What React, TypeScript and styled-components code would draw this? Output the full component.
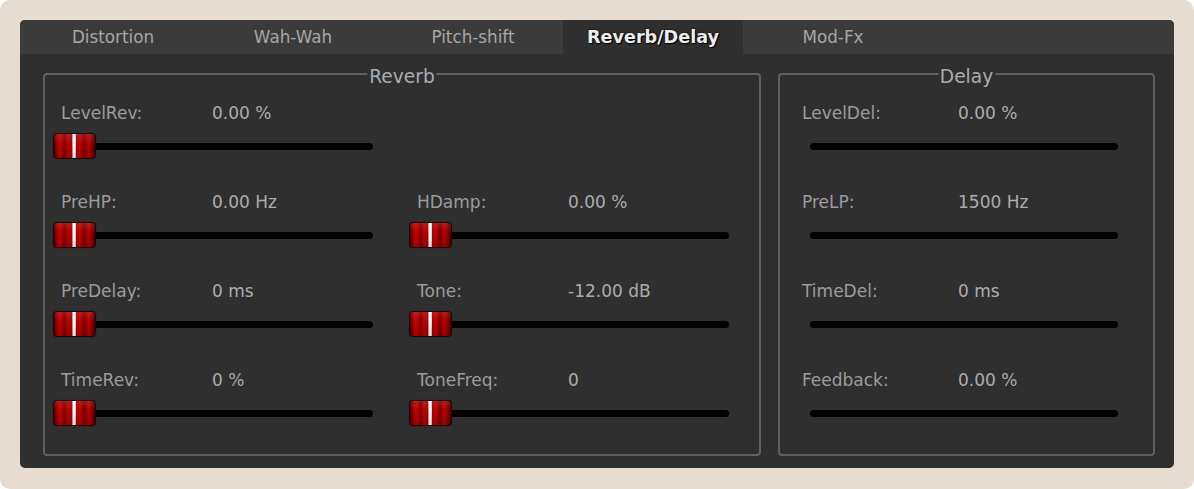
import React from "react";
import styled, { createGlobalStyle } from "styled-components";

const Global = createGlobalStyle`
  html, body { margin: 0; padding: 0; background: #ffffff; }
  body { font-family: "DejaVu Sans", Verdana, sans-serif; }
`;

const Frame = styled.div`
  width: 1194px;
  height: 489px;
  box-sizing: border-box;
  background: #e6dcd2;
  border-radius: 10px;
  padding: 20px 20px 21px 20px;
`;

const Panel = styled.div`
  height: 100%;
  background: #2f2f2f;
  border-radius: 5px;
  overflow: hidden;
  display: flex;
  flex-direction: column;
`;

const TabBar = styled.div`
  height: 34px;
  flex: 0 0 34px;
  background: #3b3b3b;
  display: flex;
  padding-left: 3px;
`;

const Tab = styled.div<{ $active?: boolean }>`
  width: 180px;
  display: flex;
  align-items: center;
  justify-content: center;
  background: ${(p) => (p.$active ? "#2f2f2f" : "#3b3b3b")};
  color: ${(p) => (p.$active ? "#ededed" : "#a6a6a6")};
  font-size: ${(p) => (p.$active ? "17.6px" : "16.8px")};
  font-weight: ${(p) => (p.$active ? "bold" : "normal")};
  text-shadow: ${(p) => (p.$active ? "1px 1px 1px #000, 0 0 2px #000" : "none")};
`;

const Content = styled.div`
  flex: 1;
  display: flex;
  gap: 17px;
  padding: 19px 19px 12px 23px;
`;

const Group = styled.div<{ $width: number }>`
  position: relative;
  width: ${(p) => p.$width}px;
  box-sizing: border-box;
  border: 2px solid #606060;
  border-radius: 4px;
  padding: 27px 0 28px ${(p) => (p.$width > 500 ? 8 : 22)}px;
`;

const Title = styled.div`
  position: absolute;
  top: -9px;
  left: 50%;
  transform: translateX(-50%);
  background: #2f2f2f;
  padding: 0 2px;
  color: #a7adb4;
  font-size: 18.6px;
  line-height: 22px;
`;

const Grid = styled.div<{ $cols: number }>`
  display: grid;
  grid-template-columns: repeat(${(p) => p.$cols}, 320px);
  column-gap: 36px;
  row-gap: 32px;
`;

const Cell = styled.div`
  display: flex;
  flex-direction: column;
  gap: 11px;
`;

const LabelRow = styled.div<{ $indent: number }>`
  display: flex;
  box-sizing: border-box;
  height: 20px;
  align-items: center;
  padding-left: ${(p) => p.$indent}px;
  padding-top: 1px;
  font-size: 17px;
  line-height: 20px;
  white-space: nowrap;
`;

const Label = styled.span<{ $w: number }>`
  width: ${(p) => p.$w}px;
  color: #9c9c9c;
`;

const Value = styled.span`
  color: #acacac;
`;

const SliderBox = styled.div<{ $indent: number; $width: number }>`
  position: relative;
  height: 26px;
  margin-left: ${(p) => p.$indent}px;
  width: ${(p) => p.$width}px;
  display: flex;
  align-items: center;
`;

const Track = styled.div`
  width: 100%;
  height: 7px;
  background: #000;
  border-radius: 4px;
`;

const Thumb = styled.div`
  position: absolute;
  left: 0;
  top: 0;
  width: 43px;
  height: 26px;
  box-sizing: border-box;
  border: 1px solid #1c0505;
  border-radius: 4px;
  background:
    linear-gradient(to bottom, rgba(255,255,255,0.10), rgba(0,0,0,0) 40%, rgba(0,0,0,0.15)),
    linear-gradient(
      to right,
      #4a0000 0%,
      #b40000 10%,
      #c80000 16%,
      #7a0000 26%,
      #c20000 34%,
      #a00000 44%,
      #ffffff 46%,
      #ffffff 52%,
      #a00000 54%,
      #c80000 62%,
      #7a0000 74%,
      #c00000 84%,
      #8a0000 92%,
      #4a0000 100%
    );
  box-shadow: 0 0 1px rgba(0, 0, 0, 0.8);
`;

type Param = { label: string; value: string } | null;

const reverb: Param[] = [
  { label: "LevelRev:", value: "0.00 %" },
  null,
  { label: "PreHP:", value: "0.00 Hz" },
  { label: "HDamp:", value: "0.00 %" },
  { label: "PreDelay:", value: "0 ms" },
  { label: "Tone:", value: "-12.00 dB" },
  { label: "TimeRev:", value: "0 %" },
  { label: "ToneFreq:", value: "0" },
];

const delay: Param[] = [
  { label: "LevelDel:", value: "0.00 %" },
  { label: "PreLP:", value: "1500 Hz" },
  { label: "TimeDel:", value: "0 ms" },
  { label: "Feedback:", value: "0.00 %" },
];

const tabs = ["Distortion", "Wah-Wah", "Pitch-shift", "Reverb/Delay", "Mod-Fx"];

export default function App() {
  return (
    <>
      <Global />
      <Frame>
        <Panel>
          <TabBar>
            {tabs.map((t) => (
              <Tab key={t} $active={t === "Reverb/Delay"}>
                {t}
              </Tab>
            ))}
          </TabBar>
          <Content>
            <Group $width={718}>
              <Title>Reverb</Title>
              <Grid $cols={2}>
                {reverb.map((p, i) =>
                  p ? (
                    <Cell key={i}>
                      <LabelRow $indent={8}>
                        <Label $w={151}>{p.label}</Label>
                        <Value>{p.value}</Value>
                      </LabelRow>
                      <SliderBox $indent={0} $width={320}>
                        <Track />
                        <Thumb />
                      </SliderBox>
                    </Cell>
                  ) : (
                    <Cell key={i} />
                  )
                )}
              </Grid>
            </Group>
            <Group $width={377}>
              <Title>Delay</Title>
              <Grid $cols={1}>
                {delay.map((p, i) => (
                  <Cell key={i}>
                    <LabelRow $indent={0}>
                      <Label $w={156}>{p!.label}</Label>
                      <Value>{p!.value}</Value>
                    </LabelRow>
                    <SliderBox $indent={8} $width={308}>
                      <Track />
                    </SliderBox>
                  </Cell>
                ))}
              </Grid>
            </Group>
          </Content>
        </Panel>
      </Frame>
    </>
  );
}
